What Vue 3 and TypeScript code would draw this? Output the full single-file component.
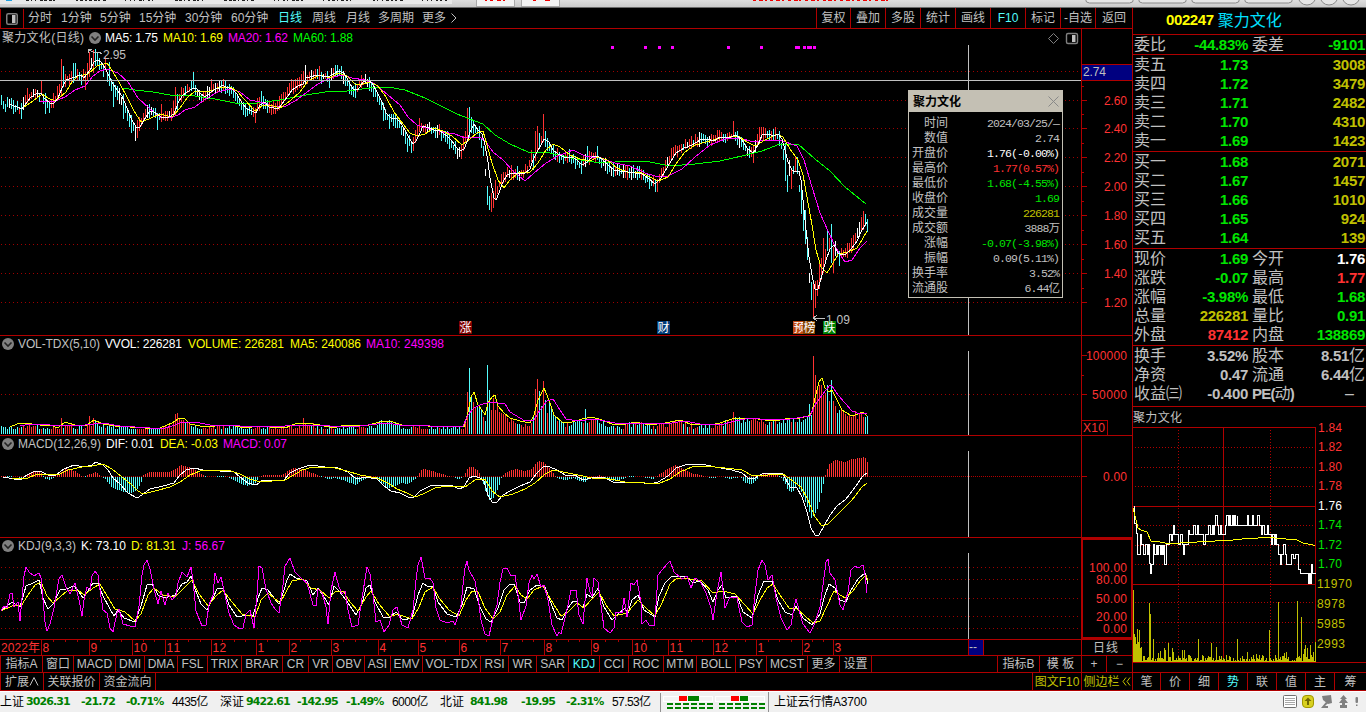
<script setup lang="ts">
type Point = [number, number]
type Label = { x: number; y: number; t: string; w?: number; c: string }

const RED = '#ff3232'
const GREY = '#c0c0c0'
const WHITE = '#ffffff'
const YELLOW = '#ffff00'
const MAGENTA = '#ff00ff'
const GREEN = '#00e600'
const OLIVE = '#c0c000'

const parse = (s: string): Point[] => s.trim().split(/\s+/).map(p => p.split(',').map(Number) as Point)

const at = (pts: Point[], x: number): number => {
  if (x <= pts[0][0]) return pts[0][1]
  for (let i = 1; i < pts.length; i++) {
    if (x <= pts[i][0]) {
      const [x0, y0] = pts[i - 1]
      const [x1, y1] = pts[i]
      return x1 === x0 ? y1 : y0 + ((y1 - y0) * (x - x0)) / (x1 - x0)
    }
  }
  return pts[pts.length - 1][1]
}

const rnd = (i: number, k: number): number => {
  const v = Math.sin(i * 12.9898 + k * 78.233) * 43758.5453
  return v - Math.floor(v)
}

/* moving averages of the price pane */
const ma5 = '9,104 17,107 22,109 27,102 31,97 36,94 41,93 44,98 50,103 54,103 58,98 62,88 66,80 72,78 80,75 84,78 90,70 94,62 98,60 101,62 105,68 108,74 113,84 117,90 122,96 127,108 131,118 136,127 140,127 144,120 149,112 153,111 158,115 163,118 169,117 174,114 178,103 182,96 187,92 192,89 196,88 200,93 205,97 210,93 215,89 219,88 222,85 226,87 232,89 237,94 242,103 247,109 252,111 256,113 260,105 265,102 269,107 274,108 279,108 284,101 288,96 292,90 298,86 303,84 306,78 310,77 317,75 322,76 328,77 332,75 338,71 344,73 348,80 353,89 358,90 363,82 368,80 372,83 377,92 382,102 386,113 391,118 396,118 400,122 405,130 409,138 413,144 416,141 420,133 423,126 429,128 434,130 440,131 447,136 452,141 456,147 460,151 464,149 467,142 470,132 474,124 478,130 482,134 485,145 488,162 490,178 492,188 494,198 496,200 499,193 502,184 507,175 512,173 518,173 525,173 530,169 533,160 537,152 541,145 544,139 549,142 553,150 558,154 566,158 572,157 577,160 582,165 587,162 592,157 598,156 603,160 608,165 614,170 620,171 628,172 635,173 642,174 648,178 655,184 661,178 668,166 676,153 684,148 692,145 700,140 707,139 714,141 720,137 728,138 736,135 742,140 747,148 753,153 758,145 762,135 768,134 774,136 778,134 782,139 785,150 788,162 792,170 795,172 799,171 801,180 803,200 806,230 809,257 812,275 815,289 818,289 822,275 826,260 830,249 834,245 838,253 842,255 846,254 852,248 857,241 862,230 867,222'
const ma10 = '24,107 33,101 42,94 48,98 55,101 60,97 66,92 72,82 78,76 88,74 97,66 107,63 113,72 120,84 127,97 134,111 141,122 149,119 160,114 172,117 180,108 187,98 195,91 208,92 220,87 230,87 237,91 244,99 255,111 262,106 270,105 280,108 290,101 300,92 308,81 320,75 330,78 338,73 347,76 355,84 363,84 370,82 378,86 386,97 394,112 403,124 410,133 417,136 425,134 434,128 443,131 452,136 462,145 470,139 477,133 483,131 487,145 492,163 498,180 504,188 510,180 518,173 530,172 538,163 546,150 553,144 560,147 570,155 580,159 590,161 598,157 607,160 617,168 627,172 640,172 650,177 658,181 668,177 676,164 685,152 695,145 706,142 720,138 738,136 747,142 755,146 765,140 777,134 783,137 790,149 798,160 803,175 807,197 812,225 816,250 821,267 827,273 832,265 838,254 848,252 857,248 862,240 867,231'
const ma20 = '40,101 55,101 65,97 75,90 85,86 93,76 100,71 107,69 118,73 128,82 138,98 150,109 160,117 170,118 178,115 185,110 195,107 207,98 218,92 230,89 240,92 250,100 260,102 272,106 284,107 295,101 306,93 318,84 330,78 342,75 352,78 365,80 375,84 388,95 400,105 408,117 417,125 430,129 443,132 455,134 465,138 480,137 486,142 493,152 503,160 513,171 525,181 534,173 546,163 558,156 573,150 585,156 600,158 615,163 630,166 645,173 655,176 668,176 682,169 695,157 710,145 725,139 740,138 753,142 765,140 780,140 797,146 804,160 812,187 820,213 828,231 836,248 845,262 852,260 860,248 867,241'
const ma60 = '123,88 135,90 153,92 170,95 195,96 215,99 235,103 257,103 280,100 300,96 325,92 347,91 370,88 388,87 405,90 425,98 445,108 457,114 475,121 483,124 495,135 510,144 528,152 550,153 575,159 600,163 630,161 650,162 670,166 695,164 720,161 742,156 762,151 780,144 798,144 815,159 830,171 845,187 866,204'

/* volume averages */
const volMa5 = '10,427 17,424 22,423 32,424 40,425 50,425 58,428 65,422 75,425 85,426 94,420 103,424 115,426 130,427 145,428 160,428 172,423 178,419 184,418 190,424 200,426 215,426 230,425 245,428 258,426 270,427 285,428 295,424 305,423 320,425 333,428 345,425 365,426 380,422 390,421 405,426 420,425 435,427 447,426 464,427 468,412 471,397 474,392 478,405 482,410 485,415 488,403 492,397 495,395 498,406 504,413 510,418 520,421 530,423 534,415 538,400 544,388 549,400 554,415 562,422 572,422 582,419 592,417 602,420 612,424 622,425 635,422 650,425 665,423 680,420 690,424 710,425 720,423 735,418 750,418 765,420 780,420 790,418 800,418 808,416 812,412 815,398 819,382 822,378 825,388 829,392 832,390 836,398 842,410 850,415 855,415 863,412 867,416'
const volMa10 = '20,426 30,424 50,425 65,425 85,425 103,423 120,426 150,428 165,428 172,426 180,423 195,422 210,425 240,426 270,427 300,425 330,426 360,426 385,423 400,425 430,426 463,426 468,415 474,408 480,405 490,402 505,404 510,412 525,421 534,420 540,410 547,401 553,399 560,410 566,419 578,421 595,419 605,421 620,424 645,423 665,424 685,421 700,424 720,425 735,421 750,418 770,420 790,419 810,416 815,405 822,395 830,385 832,386 838,395 845,403 852,411 860,414 867,413'

/* MACD pane */
const dif = '3,477 20,480 27,475 33,472 40,471 48,475 56,475 64,469 74,465 84,467 92,465 96,462 103,465 108,470 113,478 120,484 128,493 137,498 142,495 150,489 163,486 174,483 180,475 186,470 194,468 203,470 220,471 233,471 240,477 248,483 256,485 263,480 275,480 284,480 290,473 298,469 310,465 325,467 338,468 348,472 356,479 366,477 377,479 384,486 391,491 400,493 408,497 413,498 420,491 430,486 445,485 453,486 459,489 464,487 469,478 474,476 480,478 484,481 488,495 492,502 497,502 503,495 510,491 520,486 530,482 537,473 544,466 550,467 557,470 565,475 575,475 583,480 595,477 605,478 613,482 623,483 637,482 650,484 658,482 668,476 676,468 685,465 702,464 715,467 732,470 742,473 748,478 753,479 762,474 775,473 783,474 790,487 797,488 802,497 807,512 811,528 815,535 819,535 824,526 830,515 837,506 845,500 850,494 856,486 860,480 863,476 867,473'
const dea = '12,478 28,478 37,474 48,474 58,475 68,470 82,467 92,466 103,464 112,469 122,477 132,485 138,491 143,494 155,491 170,487 180,482 190,475 200,471 228,470 240,474 250,479 260,482 285,480 292,476 302,470 313,467 335,468 347,471 360,475 377,478 388,483 397,489 407,493 415,497 423,494 435,488 447,486 465,487 475,480 485,479 492,491 500,497 513,494 525,489 535,483 545,474 553,470 563,472 578,475 592,478 610,479 625,482 645,483 660,483 670,479 680,472 692,467 705,466 725,468 742,470 753,476 768,475 783,474 793,481 801,487 808,500 815,517 822,526 828,524 840,512 852,500 862,487 867,483'
const histogram = parse('1,0.5 17,-1 20,-3 25,1 30,4 40,4 45,-3 50,-4 55,-1 60,3 65,7 75,5 83,-1 90,2 96,4 100,0 105,-3 112,-12 118,-14 128,-17 134,-16 140,-9 143,1 150,4 170,4 178,9 181,11 192,8 200,2 207,-1 225,0 232,-3 240,-8 247,-10 254,-8 258,-2 262,1 270,1 282,1 288,6 292,8 305,6 312,3 320,0 327,-3 335,-2 345,-5 355,-9 362,-4 370,0 378,-4 387,-12 393,-11 400,-7 408,-8 415,-3 420,5 423,7 432,5 445,1 453,-1 458,-3 463,-1 466,5 468,9 473,9 478,5 482,-4 485,-15 489,-24 493,-22 498,-12 501,-2 504,3 515,7 525,5 532,7 536,14 539,15 543,14 548,9 553,3 557,-2 565,-4 573,-2 580,-5 585,-6 590,-2 600,1 607,-3 613,-5 622,-3 630,0 640,-1 653,-3 658,1 664,5 670,9 675,11 682,8 690,3 700,1 710,-2 722,-1 730,-3 740,-1 745,-7 752,-8 757,-3 762,2 775,2 780,-1 785,-8 788,-15 792,-16 797,-9 802,-18 806,-28 811,-42 816,-36 820,-22 823,-8 826,5 829,12 835,16 845,14 850,17 860,18 864,20 867,14')

/* KDJ pane */
const jLine = '1,611 4,606 7,608 10,594 12,593 14,607 18,602 20,621 22,598 24,576 26,567 29,572 34,576 39,573 41,578 43,600 45,622 47,631 50,624 54,608 57,590 59,579 62,575 66,587 70,594 75,583 79,600 82,616 84,600 87,587 90,590 92,576 95,571 98,575 100,590 103,610 107,613 110,628 113,632 117,613 119,609 123,624 130,626 135,627 139,606 142,575 144,565 147,560 150,569 154,589 158,604 161,591 165,605 168,593 172,600 176,595 178,583 182,572 187,577 191,567 193,580 196,611 202,626 206,625 209,605 213,595 215,573 218,583 221,577 225,595 229,613 234,625 240,629 243,628 246,614 250,610 254,628 257,595 259,566 262,568 266,589 271,603 275,609 279,613 283,585 285,566 290,558 295,572 303,580 307,583 313,605 316,606 318,589 322,593 326,607 328,624 331,590 335,572 339,587 342,594 345,591 348,610 352,627 358,625 362,598 367,567 370,574 373,595 376,622 380,620 384,632 389,625 393,610 397,607 402,625 408,628 413,610 416,580 418,565 421,557 425,578 430,578 433,583 436,608 440,620 447,623 453,621 455,625 458,616 461,605 463,585 465,568 467,561 469,570 475,581 478,598 481,620 485,634 489,636 493,618 497,605 500,582 503,569 507,568 511,576 515,575 518,595 521,620 526,606 529,583 532,575 534,579 537,574 541,587 544,585 548,600 552,625 557,636 559,632 561,634 565,618 568,605 571,590 576,590 579,615 583,624 587,578 590,592 592,596 594,578 598,582 601,605 604,628 610,633 614,628 616,612 622,613 624,598 627,617 631,583 634,585 637,580 641,602 642,624 646,620 649,625 654,626 656,605 658,575 662,570 668,563 670,561 674,572 682,579 687,576 691,588 695,578 700,581 706,593 711,608 713,620 717,592 721,572 725,608 730,597 737,597 739,608 742,622 747,627 752,625 755,594 758,570 762,560 765,565 768,580 772,575 776,598 781,618 787,630 791,625 794,607 796,599 799,610 803,624 810,633 814,625 820,607 823,585 826,562 828,559 830,573 835,580 840,605 843,610 848,592 851,570 855,566 858,568 863,565 865,575 867,593'
const kLine = '1,611 12,602 20,607 26,586 33,583 39,580 43,598 48,609 53,604 60,590 66,589 74,586 79,592 83,598 87,593 93,583 98,583 103,596 110,609 114,616 118,610 124,618 135,622 141,606 147,585 152,584 158,595 165,598 175,595 182,584 187,582 191,576 195,589 201,604 207,610 213,598 217,589 223,588 229,605 237,617 247,615 253,616 258,598 262,588 268,590 274,598 279,604 284,590 287,580 290,574 296,578 307,581 313,595 318,588 324,597 329,605 334,586 340,592 348,603 356,615 362,604 366,588 370,585 375,602 383,617 389,618 396,612 403,620 412,618 418,595 423,583 428,587 433,586 438,602 447,614 456,617 462,605 467,587 474,589 480,607 486,619 491,622 498,608 504,590 509,585 514,584 520,602 524,603 530,590 537,585 545,587 552,606 557,618 562,620 568,608 573,601 577,602 583,608 587,594 592,598 598,588 604,607 612,620 618,614 625,608 628,613 632,600 638,595 644,610 655,617 659,596 665,583 672,576 687,577 693,583 700,581 708,590 713,602 718,590 722,585 726,598 737,596 743,612 752,618 758,595 764,581 772,581 778,600 785,612 792,615 796,606 803,618 812,625 820,614 824,598 829,584 835,588 840,600 846,602 851,590 858,579 865,573 868,584'
const dLine = '1,611 14,605 21,606 28,595 35,585 41,582 47,596 53,603 60,597 67,591 78,590 84,595 93,588 100,584 107,596 115,609 125,612 135,621 141,614 148,595 154,588 163,595 175,597 184,588 192,580 199,594 208,606 216,596 223,590 232,602 242,614 255,617 261,600 268,593 280,603 286,592 292,581 303,579 311,588 320,590 329,598 336,591 343,591 350,602 358,611 366,597 371,591 379,604 390,617 397,614 412,619 419,607 425,592 433,587 439,598 449,610 459,616 466,600 472,591 478,592 485,608 493,619 500,612 507,595 515,586 521,595 527,599 534,590 543,586 551,600 561,616 568,612 577,603 584,608 591,600 599,592 606,605 614,616 627,613 638,600 646,608 655,616 662,603 670,584 677,578 690,579 702,581 713,593 723,591 735,594 745,605 753,614 760,600 767,588 773,584 780,595 789,608 797,609 805,616 813,623 820,621 827,606 834,591 845,598 853,591 860,581 866,575 868,581'

type Bar = [number, number, number, string]
const rangeBars: Bar[] = [
  [1, 95, 105, 'c'], [3, 101, 109, 'c'], [5, 104, 112, 'c'], [21, 103, 119, 'c'], [27, 88, 103, 'r'], [41, 81, 95, 'r'], [45, 93, 114, 'c'], [49, 102, 113, 'c'],
  [61, 59, 97, 'r'], [63, 66, 87, 'c'], [73, 63, 83, 'c'], [75, 63, 78, 'c'], [85, 72, 90, 'r'], [87, 63, 80, 'r'], [89, 52, 77, 'r'], [93, 50, 73, 'r'], [95, 49, 66, 'c'], [97, 52, 66, 'c'], [99, 58, 70, 'c'], [105, 56, 70, 'r'], [109, 62, 86, 'c'],
  [113, 82, 107, 'c'], [117, 86, 100, 'c'], [123, 94, 119, 'c'], [131, 115, 133, 'c'], [135, 126, 141, 'w'], [137, 120, 138, 'r'],
  [157, 113, 130, 'c'], [161, 104, 122, 'r'], [175, 87, 116, 'r'], [177, 94, 110, 'c'], [193, 72, 88, 'c'], [211, 79, 93, 'r'], [223, 79, 90, 'r'],
  [255, 108, 123, 'r'], [261, 91, 106, 'c'], [291, 79, 92, 'r'], [305, 65, 84, 'w'], [319, 66, 80, 'r'], [329, 76, 88, 'c'], [335, 65, 76, 'c'], [337, 65, 77, 'c'],
  [353, 86, 97, 'c'], [383, 103, 121, 'c'], [389, 114, 129, 'c'], [407, 138, 152, 'c'], [411, 141, 153, 'c'], [413, 137, 151, 'r'], [419, 118, 132, 'r'],
  [457, 148, 159, 'w'], [461, 144, 159, 'r'], [467, 108, 142, 'r'], [469, 107, 138, 'c'], [471, 117, 133, 'c'], [485, 169, 176, 'w'], [487, 186, 205, 'c'], [489, 196, 210, 'c'], [491, 193, 212, 'r'], [493, 191, 208, 'r'],
  [495, 180, 199, 'r'], [533, 154, 170, 'c'], [535, 131, 161, 'r'], [537, 126, 152, 'r'], [539, 133, 149, 'c'], [543, 114, 142, 'r'], [545, 131, 147, 'c'],
  [581, 160, 174, 'c'], [587, 146, 163, 'c'], [597, 146, 160, 'c'], [655, 180, 192, 'c'], [657, 179, 192, 'r'], [733, 121, 136, 'r'],
  [749, 146, 158, 'c'], [753, 145, 163, 'r'], [785, 143, 181, 'c'], [787, 175, 192, 'c'], [789, 160, 176, 'w'], [791, 170, 189, 'r'], [795, 157, 171, 'r'], [797, 157, 174, 'c'],
  [801, 185, 214, 'c'], [803, 210, 231, 'c'], [805, 210, 244, 'c'], [807, 237, 260, 'c'], [809, 273, 283, 'w'], [811, 282, 300, 'c'], [813, 284, 318, 'r'], [815, 281, 308, 'r'],
  [817, 280, 296, 'r'], [819, 264, 289, 'r'], [821, 258, 280, 'r'], [823, 238, 273, 'r'], [827, 231, 251, 'c'], [829, 238, 252, 'r'], [831, 224, 263, 'c'], [833, 247, 273, 'r'], [835, 241, 256, 'w'], [839, 251, 266, 'c'],
  [855, 233, 243, 'r'], [859, 222, 234, 'w'], [861, 217, 231, 'r'], [863, 211, 230, 'r'], [865, 214, 226, 'c'], [867, 219, 232, 'c'],
]
const volumeBars: Record<number, [number, string]> = {
  61: [418, 'r'], 89: [416, 'r'], 93: [418, 'r'], 175: [414, 'r'], 177: [413, 'r'], 303: [418, 'r'], 381: [420, 'c'],
  467: [392, 'r'], 469: [368, 'c'], 471: [395, 'c'], 473: [402, 'r'], 475: [407, 'r'], 487: [365, 'c'], 489: [390, 'c'], 491: [410, 'r'], 493: [398, 'r'],
  483: [417, 'r'], 485: [421, 'c'], 495: [410, 'r'], 535: [389, 'r'], 537: [379, 'r'], 539: [391, 'c'], 541: [406, 'c'], 543: [381, 'r'], 545: [400, 'c'], 547: [413, 'r'],
  585: [409, 'c'], 733: [412, 'r'], 809: [404, 'c'], 813: [356, 'r'], 815: [375, 'r'], 817: [388, 'r'], 821: [385, 'r'], 823: [395, 'r'], 827: [385, 'c'],
  829: [401, 'r'], 831: [380, 'c'], 833: [401, 'r'], 835: [406, 'r'], 837: [413, 'c'], 839: [410, 'c'], 855: [411, 'r'],
}

const candles: Record<string, string> = { r: '', c: '', w: '' }
const volumes: Record<string, string> = { r: '', c: '' }
const macdBars: Record<string, string> = { r: '', c: '' }
const ma5Pts = parse(ma5)
const volPts = parse(volMa5)

for (let i = 0; i <= 433; i++) {
  const x = 1 + 2 * i
  const special = rangeBars.find(b => b[0] === x)
  const slope = at(ma5Pts, x + 5) - at(ma5Pts, x)
  let dir = slope + (rnd(i, 1) - 0.5) * 8 < 0 ? 'r' : 'c'
  if (special) {
    candles[special[3]] += `M${x + 0.5} ${special[1]}V${special[2]}`
    dir = special[3] === 'w' ? dir : special[3]
  } else {
    const mid = at(ma5Pts, x + 3)
    const tone = rnd(i, 2) > 0.88 ? 'w' : dir
    candles[tone] += `M${x + 0.5} ${Math.round(mid - 2 - rnd(i, 3) * 6)}V${Math.round(mid + 2 + rnd(i, 4) * 6)}`
  }
  const v = volumeBars[x]
  const top = v ? v[0] : Math.min(429, Math.round(at(volPts, x) - 1 + rnd(i, 5) * 6))
  volumes[v ? v[1] : dir] += `M${x + 0.5} 434V${top}`
  const h = at(histogram, x)
  macdBars[h >= 0 ? 'r' : 'c'] += `M${x + 0.5} 476.5V${Math.round(476 - h)}`
}

const priceGrid = [71, 100, 128, 157, 186, 215, 244, 273, 302]
const priceTicks = [86, 100, 114, 128, 143, 157, 172, 186, 201, 215, 230, 244, 259, 273, 288, 302]
const kdjGrid = [567, 579, 598, 616, 628]
const signalDots = [611, 644, 658, 671, 727, 760, 795, 797, 803, 807, 809, 813]

const priceHead: Label[] = [
  { x: 2, y: 42, t: '聚力文化(日线)', w: 82, c: GREY },
  { x: 105, y: 42, t: 'MA5: 1.75', w: 53, c: WHITE },
  { x: 163, y: 42, t: 'MA10: 1.69', w: 60, c: YELLOW },
  { x: 228, y: 42, t: 'MA20: 1.62', w: 60, c: MAGENTA },
  { x: 293, y: 42, t: 'MA60: 1.88', w: 60, c: '#00ff00' },
  { x: 103, y: 59, t: '2.95', w: 23, c: GREY },
  { x: 826, y: 324, t: '1.09', w: 24, c: GREY },
]
const volHead: Label[] = [
  { x: 18, y: 348, t: 'VOL-TDX(5,10)', w: 82, c: GREY },
  { x: 105, y: 348, t: 'VVOL: 226281', w: 77, c: WHITE },
  { x: 188, y: 348, t: 'VOLUME: 226281', w: 96, c: YELLOW },
  { x: 290, y: 348, t: 'MA5: 240086', w: 71, c: YELLOW },
  { x: 366, y: 348, t: 'MA10: 249398', w: 78, c: MAGENTA },
]
const macdHead: Label[] = [
  { x: 18, y: 448, t: 'MACD(12,26,9)', w: 83, c: GREY },
  { x: 106, y: 448, t: 'DIF: 0.01', w: 48, c: WHITE },
  { x: 160, y: 448, t: 'DEA: -0.03', w: 58, c: YELLOW },
  { x: 223, y: 448, t: 'MACD: 0.07', w: 64, c: MAGENTA },
]
const kdjHead: Label[] = [
  { x: 18, y: 550, t: 'KDJ(9,3,3)', w: 58, c: GREY },
  { x: 81, y: 550, t: 'K: 73.10', w: 45, c: WHITE },
  { x: 131, y: 550, t: 'D: 81.31', w: 45, c: YELLOW },
  { x: 182, y: 550, t: 'J: 56.67', w: 43, c: MAGENTA },
]
const priceAxis = ['2.60', '2.40', '2.20', '2.00', '1.80', '1.60', '1.40', '1.20'].map((t, i) => ({ t, y: priceGrid[i + 1] + 5 }))
const kdjAxis = [
  { t: '100.00', y: 572, w: 38 }, { t: '80.00', y: 584, w: 31 }, { t: '50.00', y: 603, w: 31 },
  { t: '20.00', y: 621, w: 31 }, { t: '0.00', y: 633, w: 24 },
]
const months: [number, string][] = [
  [41, '8'], [89, '9'], [132, '10'], [165, '11'], [211, '12'], [256, '1'], [289, '2'], [331, '3'], [378, '4'], [418, '5'],
  [459, '6'], [500, '7'], [544, '8'], [591, '9'], [632, '10'], [668, '11'], [713, '12'], [756, '1'], [802, '2'], [833, '3'],
]
const minorTicks = months.slice(0, -1).flatMap(([x], i) => {
  const gap = months[i + 1][0] - x
  const n = Math.max(2, Math.round(gap / 12))
  return Array.from({ length: n - 1 }, (_, k) => Math.round(x + (gap * (k + 1)) / n))
})

const periods = ['分时', '1分钟', '5分钟', '15分钟', '30分钟', '60分钟', '日线', '周线', '月线', '多周期', '更多', '〉']
const tools = ['复权', '叠加', '多股', '统计', '画线', 'F10', '标记', '-自选', '返回']
const indicators = ['指标A', '窗口', 'MACD', 'DMI', 'DMA', 'FSL', 'TRIX', 'BRAR', 'CR', 'VR', 'OBV', 'ASI', 'EMV', 'VOL-TDX', 'RSI', 'WR', 'SAR', 'KDJ', 'CCI', 'ROC', 'MTM', 'BOLL', 'PSY', 'MCST', '更多', '设置', '', '指标B', '模 板', '+', '−']
const sideTabs = ['笔', '价', '细', '势', '联', '值', '主', '筹']

const popupRows = [
  ['时间', '2024/03/25/—', 'grey'], ['数值', '2.74', 'grey'], ['开盘价', '1.76(-0.00%)', 'white'], ['最高价', '1.77(0.57%)', 'red'],
  ['最低价', '1.68(-4.55%)', 'green'], ['收盘价', '1.69', 'green'], ['成交量', '226281', 'olive'], ['成交额', '3888万', 'grey'],
  ['涨幅', '-0.07(-3.98%)', 'green'], ['振幅', '0.09(5.11%)', 'grey'], ['换手率', '3.52%', 'grey'], ['流通股', '6.44亿', 'grey'],
]

const sells = [['卖五', '1.73', '3008'], ['卖四', '1.72', '3479'], ['卖三', '1.71', '2482'], ['卖二', '1.70', '4310'], ['卖一', '1.69', '1423']]
const buys = [['买一', '1.68', '2071'], ['买二', '1.67', '1457'], ['买三', '1.66', '1010'], ['买四', '1.65', '924'], ['买五', '1.64', '139']]
const quotes = [
  ['现价', '1.69', 'green', '今开', '1.76', 'white'],
  ['涨跌', '-0.07', 'green', '最高', '1.77', 'red'],
  ['涨幅', '-3.98%', 'green', '最低', '1.68', 'green'],
  ['总量', '226281', 'olive', '量比', '0.91', 'green'],
  ['外盘', '87412', 'red', '内盘', '138869', 'green'],
]
const basics = [
  ['换手', '3.52%', '股本', '8.51', '亿'],
  ['净资', '0.47', '流通', '6.44', '亿'],
]

const miniAxis: Label[] = [
  ...['1.84', '1.82', '1.80', '1.78', '1.76', '1.74', '1.72', '1.70'].map((t, i) => ({
    x: 1318, y: [432, 451, 471, 490, 510, 529, 549, 568][i], t, w: 24, c: i < 4 ? RED : i === 4 ? WHITE : GREEN,
  })),
  { x: 1317, y: 588, t: '11970', w: 35, c: OLIVE },
  { x: 1317, y: 608, t: '8978', w: 28, c: OLIVE },
  { x: 1317, y: 628, t: '5985', w: 28, c: OLIVE },
  { x: 1317, y: 648, t: '2993', w: 28, c: OLIVE },
]
const intraday = '160,77 163,130 168,160 172,223 177,223 180,163 184,192 188,223 194,192 200,223 205,192 208,250 211,280 214,252 220,192 223,223 228,194 231,223 235,194 239,223 243,194 246,223 249,194 252,252 256,252 259,192 266,192 268,163 272,180 275,163 280,135 283,163 290,163 294,192 300,163 305,192 308,222 312,192 318,192 324,150 328,163 336,163 340,135 344,163 350,135 353,163 362,163 370,192 376,163 383,135 389,163 395,135 400,163 403,135 406,106 410,135 415,163 420,135 424,163 430,163 436,135 439,106 443,135 447,106 451,135 455,106 460,135 463,106 466,135 470,106 472,135 497,135 500,106 503,135 512,135 517,106 520,135 528,135 532,106 536,135 542,163 547,135 551,163 560,135 564,163 570,163 573,192 577,163 581,192 584,163 589,192 595,223 600,252 604,223 608,192 614,223 618,252 628,252 632,223 638,235 645,223 651,223 655,268 660,280 680,280 683,310 686,280 690,310 694,252 697,280 704,280'
  .split(' ').reduce((d, p, i) => {
    const [x, y] = p.split(',').map(Number)
    const px = Math.round(1080 + x / 3) + 0.5
    const py = Math.round(480 + y / 3) + 0.5
    return d + (i === 0 ? `M${px} ${py}` : `H${px}V${py}`)
  }, '')
const average = '1133,508 1136,520 1138,528 1141,530 1147,532 1151,541 1160,542 1168,543.5 1180,543 1206,541.5 1233,540 1247,538.5 1270,537.5 1280,538.5 1297,540 1303,543 1315,545.5'
const spikes: Record<number, number> = { 1133: 72, 1134: 28, 1135: 25, 1136: 18, 1137: 33, 1138: 20, 1139: 32, 1140: 14, 1149: 59, 1150: 48, 1153: 23, 1158: 9, 1165: 12, 1168: 19, 1172: 14, 1182: 12, 1184: 12, 1198: 23, 1211: 19, 1216: 15, 1237: 23, 1247: 10, 1269: 32, 1278: 60, 1286: 10, 1297: 61, 1301: 45, 1305: 17, 1307: 14, 1310: 17, 1313: 10, 1315: 20 }
let miniVolume = ''
for (let x = 1133; x <= 1315; x++) {
  const busy = x < 1147 || x > 1300 ? 13 : (x > 1158 && x < 1176) || (x > 1277 && x < 1290) ? 10 : 5
  const h = spikes[x] ?? Math.round(1 + rnd(x, 7) * rnd(x, 8) * busy * 1.6)
  miniVolume += `M${x + 0.5} 662V${662 - h}`
}

const statusCells: [string, string][] = [
  ['上证', 'name'], ['3026.31', 'num'], ['-21.72', 'num'], ['-0.71%', 'num'], ['4435亿', 'amt'],
  ['深证', 'name'], ['9422.61', 'num'], ['-142.95', 'num'], ['-1.49%', 'num'], ['6000亿', 'amt'],
  ['北证', 'name'], ['841.98', 'num'], ['-19.95', 'num'], ['-2.31%', 'num'], ['57.53亿', 'amt'],
]
const menuSpecks = Array.from({ length: 94 }, (_, i) => ({ x: 26 + Math.round(i * 4.5), w: 1 + Math.floor(rnd(i, 11) * 3) })).filter((_, i) => i % 11 < 7)
const redSpecks = [485, 490, 497, 503, 533, 545, 548, ...Array.from({ length: 24 }, (_, i) => 753 + Math.round(i * 5.8))]
</script>

<template>
  <div class="terminal">
    <svg class="titlebar" viewBox="0 0 1366 8" width="1366" height="8" shape-rendering="crispEdges">
      <defs>
        <linearGradient id="bar" x1="0" y1="0" x2="0" y2="1">
          <stop offset="0" stop-color="#dedede" /><stop offset="1" stop-color="#cacaca" />
        </linearGradient>
      </defs>
      <rect width="1366" height="7" fill="url(#bar)" />
      <rect width="452" height="4" fill="#e9e9e9" />
      <rect x="6" width="6" height="1" fill="#20a0e0" />
      <rect v-for="(s, i) in menuSpecks" :key="i" :x="s.x" y="0" :width="s.w" height="1" fill="#222" />
      <rect x="476" y="-2" width="38" height="8" fill="#f4f4f4" stroke="#aaa" />
      <rect x="521" y="-2" width="38" height="8" fill="#f4f4f4" stroke="#aaa" />
      <rect v-for="(x, i) in redSpecks" :key="'r' + x" :x="x" y="0" :width="2 + (i % 3)" height="1" fill="#f00000" />
      <g shape-rendering="auto" fill="#e6e6e6" stroke="#8a8a8a">
        <rect x="1085.500" y="-12" width="48" height="15" rx="4" />
        <rect x="1138.500" y="-12" width="48" height="15" rx="4" />
        <rect x="1191.500" y="-12" width="48" height="15" rx="4" />
        <rect x="1244.500" y="-12" width="48" height="15" rx="4" />
        <circle cx="1307" cy="-4" r="9" /><circle cx="1329" cy="-4" r="9" /><circle cx="1351" cy="-4" r="9" />
      </g>
      <rect y="7" width="1366" height="1" fill="#6a6a6a" />
    </svg>

    <div class="body">
      <main class="left">
        <nav class="toolbar">
          <span class="layout-toggle">
            <svg width="12" height="12" viewBox="0 0 12 12"><rect x=".75" y=".75" width="10.5" height="10.5" rx="1.5" fill="none" stroke="#808080" stroke-width="1.5" /><rect x="6" y="2" width="3.5" height="8" fill="#c0c0c0" /></svg>
          </span>
          <div class="periods">
            <span v-for="p in periods" :key="p" :class="{ active: p === '日线' }">
              <svg v-if="p === '〉'" width="6" height="10" viewBox="0 0 6 10"><path d="M.5 .5L5 5L.5 9.5" fill="none" stroke="#c0c0c0" /></svg>
              <template v-else>{{ p }}</template>
            </span>
          </div>
          <div class="tools"><span v-for="t in tools" :key="t" :class="{ active: t === 'F10' }">{{ t }}</span></div>
        </nav>

        <!-- price -->
        <section class="pane price">
          <svg viewBox="0 29 1132 307" width="1132" height="307">
            <g class="crisp">
              <path v-for="y in priceGrid" :key="y" :d="`M1 ${y + 0.5}H1081`" class="dots" />
              <path d="M1081.500 29V336M0 335.500H1132" class="rule" />
              <path v-for="(y, i) in priceTicks" :key="'t' + y" :d="`M1082 ${y + 0.5}h${i % 2 ? 5 : 2}`" class="rule" />
              <path :d="candles.r" stroke="#ff3232" />
              <path :d="candles.c" stroke="#54fcfc" />
              <path :d="candles.w" stroke="#fff" />
              <polyline :points="ma60" stroke="#00ff00" />
              <polyline :points="ma20" stroke="#ff00ff" />
              <polyline :points="ma10" stroke="#ffff00" />
              <polyline :points="ma5" stroke="#fff" />
              <path d="M0 80.500H1081M968.500 45V335" stroke="#c0c0c0" />
              <rect v-for="x in signalDots" :key="'d' + x" :x="x" y="46" width="3" height="3" fill="#ff00ff" />
              <rect x="1082" y="64" width="50" height="17" fill="#000080" />
              <path d="M1082 64.500h50M1082 80.500h50" class="rule" />
              <path d="M88.500 53V49.500H92M89 50L93 52H99L102 54" stroke="#c0c0c0" />
              <path d="M813.500 318.500H825M817 315L813.500 318L817 321" stroke="#c0c0c0" />
            </g>
            <g class="txt">
              <text v-for="l in priceHead" :key="l.t" :x="l.x" :y="l.y" :fill="l.c" :textLength="l.w">{{ l.t }}</text>
              <text v-for="l in priceAxis" :key="l.t" x="1104" :y="l.y" textLength="23" fill="#ff3232">{{ l.t }}</text>
              <text x="1083" y="76" textLength="23" fill="#c0c0c0">2.74</text>
            </g>
            <g fill="none"><circle cx="95" cy="38" r="6" fill="#808080" /><path d="M91.500 36.500L95 40L98.500 36.500" stroke="#222" stroke-width="1.600" /></g>
            <g class="tags">
              <rect x="459" y="321" width="13" height="13" fill="#800000" /><text x="459.500" y="332">涨</text>
              <rect x="657" y="321" width="13" height="13" fill="#003c78" /><text x="657.500" y="332">财</text>
              <rect x="793" y="321" width="13" height="13" fill="#c04810" /><text x="793.500" y="332">预</text>
              <rect x="803" y="321" width="12" height="13" fill="#884400" /><text x="803.500" y="332">榜</text>
              <rect x="823" y="321" width="13" height="13" fill="#008000" /><text x="823.500" y="332">跌</text>
            </g>
            <path d="M1053.500 33.500L1058.500 38.500L1053.500 43.500L1048.500 38.500Z" fill="none" stroke="#808080" />
            <rect x="1066.500" y="33.500" width="11" height="10" rx="1.500" fill="none" stroke="#808080" stroke-width="1.400" /><rect x="1072" y="35" width="3.500" height="7" fill="#c0c0c0" />
          </svg>
          <aside class="popup">
            <header><b>聚力文化</b><svg width="11" height="11" viewBox="0 0 11 11"><path d="M.5 .5L10.500 10.500M10.500 .5L.5 10.500" stroke="#888" fill="none" /></svg></header>
            <dl>
              <div v-for="r in popupRows" :key="r[0]"><dt>{{ r[0] }}</dt><dd :class="r[2]">{{ r[1] }}</dd></div>
            </dl>
          </aside>
        </section>

        <!-- volume -->
        <section class="pane">
          <svg viewBox="0 336 1132 100" width="1132" height="100">
            <g class="crisp">
              <path d="M1 394.500H1081" class="dots" />
              <path d="M1081.500 336V436M0 435.500H1132M1082 355.500h5M1082 375.500h2M1082 394.500h5M1082 420.500H1107.500V435" class="rule" />
              <path :d="volumes.r" stroke="#ff3232" /><path :d="volumes.c" stroke="#54fcfc" />
              <polyline :points="volMa5" stroke="#ffff00" /><polyline :points="volMa10" stroke="#ff00ff" />
              <path d="M968.500 351V435" stroke="#c0c0c0" />
            </g>
            <g fill="none"><circle cx="8" cy="344" r="6" fill="#808080" /><path d="M4.500 342.500L8 346L11.500 342.500" stroke="#222" stroke-width="1.600" /></g>
            <g class="txt">
              <text v-for="l in volHead" :key="l.t" :x="l.x" :y="l.y" :fill="l.c" :textLength="l.w">{{ l.t }}</text>
              <g fill="#ff3232"><text x="1086" y="360" textLength="41">100000</text><text x="1092" y="399" textLength="35">50000</text><text x="1083" y="432" textLength="22">X10</text></g>
            </g>
          </svg>
        </section>

        <!-- MACD -->
        <section class="pane">
          <svg viewBox="0 436 1132 102" width="1132" height="102">
            <g class="crisp">
              <path d="M1 476.500H1081" stroke="#b00000" stroke-dasharray="1 1" />
              <path d="M1081.500 436V538M0 537.500H1132M1082 476.500h5" class="rule" />
              <path :d="macdBars.r" stroke="#ff3232" /><path :d="macdBars.c" stroke="#54fcfc" />
              <polyline :points="dif" stroke="#fff" /><polyline :points="dea" stroke="#ffff00" />
              <path d="M968.500 451V537" stroke="#c0c0c0" />
            </g>
            <g fill="none"><circle cx="8" cy="444" r="6" fill="#808080" /><path d="M4.500 442.500L8 446L11.500 442.500" stroke="#222" stroke-width="1.600" /></g>
            <g class="txt">
              <text v-for="l in macdHead" :key="l.t" :x="l.x" :y="l.y" :fill="l.c" :textLength="l.w">{{ l.t }}</text>
              <text x="1103" y="481" textLength="24" fill="#ff3232">0.00</text>
            </g>
          </svg>
        </section>

        <!-- KDJ -->
        <section class="pane">
          <svg viewBox="0 538 1132 102" width="1132" height="102">
            <g class="crisp">
              <path v-for="y in kdjGrid" :key="y" :d="`M1 ${y + 0.5}H1081`" class="dots" />
              <polyline :points="kLine" stroke="#fff" /><polyline :points="dLine" stroke="#ffff00" /><polyline :points="jLine" stroke="#ff00ff" />
              <path d="M968.500 553V639" stroke="#c0c0c0" />
              <path d="M0 639.500H1132" class="rule" />
              <rect x="1082" y="539" width="50" height="99" fill="none" stroke="#b00000" stroke-width="2" />
            </g>
            <g fill="none"><circle cx="8" cy="546" r="6" fill="#808080" /><path d="M4.500 544.500L8 548L11.500 544.500" stroke="#222" stroke-width="1.600" /></g>
            <g class="txt">
              <text v-for="l in kdjHead" :key="l.t" :x="l.x" :y="l.y" :fill="l.c" :textLength="l.w">{{ l.t }}</text>
              <text v-for="l in kdjAxis" :key="l.t" :x="1127 - l.w" :y="l.y" :textLength="l.w" fill="#ff3232">{{ l.t }}</text>
            </g>
          </svg>
        </section>

        <!-- time axis -->
        <section class="pane">
          <svg viewBox="0 640 1132 16" width="1132" height="16">
            <g class="crisp">
              <rect x="968" y="640" width="15" height="15" fill="#000080" />
              <path d="M0 655.500H1132M1081.500 640V655M968.500 640V655M983.500 640V655" class="rule" />
              <path v-for="m in months" :key="m[0]" :d="`M${m[0] + 0.5} 640V655`" class="rule" />
              <path v-for="x in minorTicks" :key="'n' + x" :d="`M${x + 0.5} 640v2`" class="rule" />
            </g>
            <g class="txt" fill="#ff3232">
              <text x="1" y="652" textLength="39">2022年</text>
              <text v-for="m in months" :key="m[0]" :x="m[0] + 1.5" y="652" :textLength="m[1].length * 6.8">{{ m[1] }}</text>
              <text x="969" y="651" textLength="8" fill="#c0c0c0">--</text>
              <text x="1093" y="652" textLength="25" fill="#c0c0c0">日线</text>
            </g>
          </svg>
        </section>

        <nav class="indicators"><span v-for="(t, i) in indicators" :key="i" :class="{ active: t === 'KDJ' }">{{ t }}</span></nav>
        <nav class="extras">
          <span>扩展<svg width="10" height="9" viewBox="0 0 10 9"><path d="M1 8.500L5 .5L9 8.500" fill="none" stroke="#c0c0c0" /></svg></span>
          <span>关联报价</span><span>资金流向</span><span></span><span class="olive">图文F10</span>
          <span class="olive">侧边栏<svg width="9" height="9" viewBox="0 0 9 9"><path d="M4 .5L1 4.500L4 8.500M8 .5L5 4.500L8 8.500" fill="none" stroke="#c0c000" /></svg></span>
        </nav>
      </main>

      <aside class="right">
        <header class="stock"><b>002247</b><span>聚力文化</span></header>
        <div class="group">
          <div class="row"><p><span>委比</span><b class="green">-44.83%</b></p><p><span>委差</span><b class="green">-9101</b></p></div>
        </div>
        <div class="group tall"><div v-for="r in sells" :key="r[0]" class="row"><p><span>{{ r[0] }}</span><b class="green">{{ r[1] }}</b></p><p class="end"><b class="olive">{{ r[2] }}</b></p></div></div>
        <div class="group tall"><div v-for="r in buys" :key="r[0]" class="row"><p><span>{{ r[0] }}</span><b class="green">{{ r[1] }}</b></p><p class="end"><b class="olive">{{ r[2] }}</b></p></div></div>
        <div class="group tall"><div v-for="r in quotes" :key="r[0]" class="row"><p><span>{{ r[0] }}</span><b :class="r[2]">{{ r[1] }}</b></p><p><span>{{ r[3] }}</span><b :class="r[5]">{{ r[4] }}</b></p></div></div>
        <div class="group basics">
          <div v-for="r in basics" :key="r[0]" class="row"><p><span>{{ r[0] }}</span><b>{{ r[1] }}</b></p><p><span>{{ r[2] }}</span><span><b>{{ r[3] }}</b>{{ r[4] }}</span></p></div>
          <div class="row"><p><span>收益㈢</span><b>-0.400</b></p><p><span class="pe"><b>PE(</b>动<b>)</b></span><i class="dash">–</i></p></div>
        </div>
        <svg class="mini" viewBox="1133 407 233 265" width="233" height="265">
          <g class="crisp">
            <path d="M1133 427.500H1315.500V662M1133 506.500H1315M1133 584.500H1315M1133 662.500H1366M1223.500 427V662" class="rule" />
            <path d="M1135 447.500H1315M1135 467.500H1315M1135 486.500H1315M1135 525.500H1315M1135 545.500H1315M1135 564.500H1315M1135 602.500H1315M1135 622.500H1315M1135 642.500H1315M1178.500 430V662M1270.500 430V662" stroke="#b00000" stroke-dasharray="1 2" />
            <path :d="miniVolume" stroke="#c0c000" />
            <path :d="intraday" stroke="#fff" />
            <polyline :points="average" stroke="#ffff00" />
          </g>
          <g class="txt">
            <text x="1133" y="421.500" textLength="49" fill="#c0c0c0">聚力文化</text>
            <text v-for="l in miniAxis" :key="l.t" :x="l.x" :y="l.y" :fill="l.c" :textLength="l.w">{{ l.t }}</text>
          </g>
        </svg>
        <nav class="side-tabs"><span v-for="t in sideTabs" :key="t" :class="{ active: t === '势' }">{{ t }}</span></nav>
      </aside>
    </div>

    <footer class="status">
      <div class="indices"><span v-for="(c, i) in statusCells" :key="i" :class="c[1]">{{ c[0] }}</span></div>
      <svg class="crisp meters" width="108" height="19" viewBox="660 693 108 19">
        <path d="M660.500 693V712" stroke="#909090" />
        <rect x="663.500" y="696.500" width="49" height="5" fill="#f4f4f4" stroke="#fff" /><rect x="715.500" y="696.500" width="49" height="5" fill="#f4f4f4" stroke="#fff" />
        <rect x="679" y="696" width="8" height="5" fill="#f00" /><rect x="688" y="696" width="11" height="5" fill="#008000" />
        <rect x="731" y="696" width="8" height="5" fill="#f00" /><rect x="740" y="696" width="8" height="5" fill="#008000" />
        <path d="M667 704H713M719 704H765M667 708H713M719 708H765" stroke="#008000" stroke-width="2" stroke-dasharray="6 2" />
      </svg>
      <span class="server">上证云行情A3700</span>
      <svg class="tray" width="78" height="16" viewBox="1282 694 78 16">
        <rect x="1283.500" y="695.500" width="13" height="12" rx="1" fill="#fff" stroke="#707070" /><path d="M1285 698.500h10M1285 700.500h10M1285 702.500h10M1285 704.500h10" stroke="#a8a8a8" />
        <rect x="1302.500" y="695.500" width="11" height="12" rx="3.500" fill="#d8d020" stroke="#a09800" /><path d="M1308 697.500L1311.500 701H1309V705H1307V701H1304.500Z" fill="#706800" />
        <g fill="#808080"><path d="M1322 696L1331 695L1332 703L1328 704L1323 700Z" /><path d="M1326 702L1321 708H1328V706H1325L1328 703Z" />
          <path d="M1343.500 695L1347 699H1345L1348 703H1345V705H1347V708H1340V705H1342V703H1339L1342 699H1340Z" />
          <rect x="1355.500" y="697" width="2.500" height="6" rx="1" /><rect x="1356" y="704.500" width="1.500" height="1.500" /></g>
      </svg>
    </footer>
  </div>
</template>

<style>
html, body { margin: 0; background: #000; overflow: hidden; }
</style>

<style scoped>
.terminal { width: 1366px; height: 712px; overflow: hidden; background: #000; color: #c0c0c0; font-family: "Liberation Sans", "Noto Sans CJK SC", sans-serif; font-size: 12px; display: flex; flex-direction: column; }
svg { display: block; flex: none; }
p, dl, dt, dd { margin: 0; }
.body { display: flex; height: 683px; }
.left { width: 1132px; }
.right { width: 233px; flex: 1; border-left: 1px solid #b00000; }

.white { color: #fff; }
.green { color: #00e600; }
.red { color: #ff3232; }
.olive { color: #c0c000; }
.active { color: #54fcfc !important; }

.toolbar { height: 20px; display: flex; border-bottom: 1px solid #b00000; line-height: 20px; white-space: nowrap; }
.layout-toggle { width: 22px; margin: 1px 0 0; height: 19px; border-left: 1px solid #b00000; border-right: 1px solid #b00000; display: flex; align-items: center; justify-content: center; }
.periods { display: grid; grid-template-columns: 33px 39px 39px 46px 46px 47px 34px 34px 32px 44px 29px 20px; margin-left: 4px; align-items: center; height: 20px; }
.tools { margin-left: auto; display: grid; grid-template-columns: 34px 35px 35px 35px 35px 35px 35px 35px 37px; }
.tools span { border-left: 1px solid #b00000; text-align: center; }

.pane { position: relative; }
.crisp { shape-rendering: crispEdges; fill: none; stroke-width: 1; }
.rule { stroke: #b00000; }
.dots { stroke: #a00000; stroke-dasharray: 1 3; }
.txt { font-family: "Liberation Sans", "Noto Sans CJK SC", sans-serif; font-size: 12px; }
.tags { font-family: "Noto Sans CJK SC", sans-serif; font-size: 12px; fill: #fff; }

.popup { position: absolute; left: 908px; top: 61px; width: 153px; height: 206px; border: 1px solid #c4c0b4; background: #000; }
.popup header { height: 21px; background: #c4c0b4; color: #000; display: flex; align-items: center; justify-content: space-between; padding: 0 3px 0 4px; line-height: 20px; }
.popup dl { padding-top: 4px; }
.popup dl div { height: 15px; line-height: 15px; display: flex; justify-content: space-between; padding-right: 2px; white-space: nowrap; }
.popup dt { width: 39px; text-align: right; }
.popup dd { font-family: "Liberation Mono", "Noto Sans CJK SC", monospace; font-size: 11.5px; letter-spacing: -.9px; padding-right: 1px; }

.indicators { height: 16px; border-bottom: 1px solid #b00000; border-left: 1px solid #b00000; display: grid; line-height: 16px; white-space: nowrap;
  grid-template-columns: 42px 31px 42px 29px 33px 30px 34px 41px 26px 24px 32px 26px 32px 58px 28px 28px 32px 31px 29px 35px 33px 39px 31px 41px 32px 32px 126px 42px 42px 25px 25px; }
.indicators span { border-right: 1px solid #b00000; text-align: center; height: 16px; }
.indicators span:last-child { border-right: 0; }
.extras { height: 17px; border-bottom: 1px solid #b00000; border-left: 1px solid #b00000; display: grid; grid-template-columns: 43px 56px 56px 877px 49px 50px; line-height: 18px; white-space: nowrap; }
.extras span { border-right: 1px solid #b00000; display: flex; justify-content: center; align-items: center; height: 17px; }
.extras span:last-child { border-right: 0; gap: 2px; }

.stock { height: 26px; border-bottom: 1px solid #b00000; display: flex; align-items: center; padding-left: 33px; gap: 4px; }
.stock b { color: #ffff00; font-size: 15px; letter-spacing: -.4px; line-height: 24px; padding-bottom: 2px; }
.stock span { color: #00e0ff; font-size: 16px; line-height: 24px; }
.group { height: 19px; border-bottom: 1px solid #b00000; }
.group.tall { height: 96px; }
.group.basics { height: 60px; }
.row { display: flex; height: 19px; font-size: 16px; line-height: 19px; white-space: nowrap; }
.row p { display: flex; justify-content: space-between; align-items: center; height: 19px; }
.row p:first-child { width: 114px; padding: 0 4px 0 1px; }
.row p:last-child { width: 113px; padding-right: 1px; }
.row p.end { justify-content: flex-end; }
.row b { font-size: 15px; letter-spacing: -.3px; }
.row .pe { letter-spacing: -.8px; }
.row .pe b { letter-spacing: -.8px; }
.dash { font-style: normal; padding-right: 11px; }
.side-tabs { height: 17px; border-top: 1px solid #b00000; border-bottom: 1px solid #b00000; display: grid; grid-template-columns: 28px 29px 29px 29px 29px 29px 29px 31px; line-height: 18px; }
.side-tabs span { border-right: 1px solid #b00000; text-align: center; height: 17px; }
.side-tabs span:last-child { border-right: 0; }

.status { height: 20px; border-top: 1px solid #fff; background: #f0f0f0; color: #000; display: flex; align-items: center; line-height: 20px; white-space: nowrap; }
.indices { display: grid; grid-template-columns: 26px 55px 45px 46px 48px 26px 51px 49px 46px 48px 30px 51px 45px 46px 48px; }
.num { font-family: "DejaVu Sans", sans-serif; font-weight: bold; font-size: 11px; letter-spacing: -.9px; color: #008000; }
.amt { letter-spacing: -.6px; }
.server { border-left: 1px solid #909090; padding-left: 5px; height: 20px; letter-spacing: -.2px; }
.tray { margin-left: auto; margin-right: 6px; }
</style>
